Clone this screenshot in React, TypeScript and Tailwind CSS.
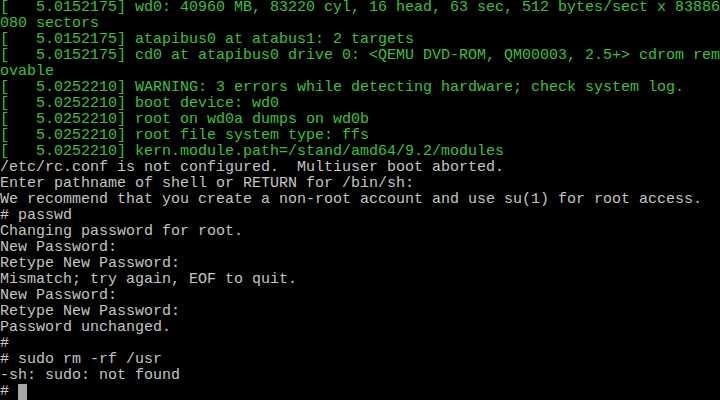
import React from "react";

const green = [
  "[   5.0152175] wd0: 40960 MB, 83220 cyl, 16 head, 63 sec, 512 bytes/sect x 83886",
  "080 sectors",
  "[   5.0152175] atapibus0 at atabus1: 2 targets",
  "[   5.0152175] cd0 at atapibus0 drive 0: <QEMU DVD-ROM, QM00003, 2.5+> cdrom rem",
  "ovable",
  "[   5.0252210] WARNING: 3 errors while detecting hardware; check system log.",
  "[   5.0252210] boot device: wd0",
  "[   5.0252210] root on wd0a dumps on wd0b",
  "[   5.0252210] root file system type: ffs",
  "[   5.0252210] kern.module.path=/stand/amd64/9.2/modules",
];

const white = [
  "/etc/rc.conf is not configured.  Multiuser boot aborted.",
  "Enter pathname of shell or RETURN for /bin/sh:",
  "We recommend that you create a non-root account and use su(1) for root access.",
  "# passwd",
  "Changing password for root.",
  "New Password:",
  "Retype New Password:",
  "Mismatch; try again, EOF to quit.",
  "New Password:",
  "Retype New Password:",
  "Password unchanged.",
  "#",
  "# sudo rm -rf /usr",
  "-sh: sudo: not found",
];

export default function App() {
  return (
    <div
      className="w-[720px] h-[400px] bg-black overflow-hidden text-[15px] leading-[16px]"
      style={{ fontFamily: '"Liberation Mono", "DejaVu Sans Mono", monospace' }}
    >
      {green.map((l, i) => (
        <div key={"g" + i} className="h-[16px] whitespace-pre text-[#3cc03c]">
          {l}
        </div>
      ))}
      {white.map((l, i) => (
        <div key={"w" + i} className="h-[16px] whitespace-pre text-[#c4c4c4]">
          {l}
        </div>
      ))}
      <div className="h-[16px] whitespace-pre text-[#c4c4c4] flex">
        <span>{"# "}</span>
        <span className="inline-block w-[9px] h-[16px] bg-[#a8a8a8]" />
      </div>
    </div>
  );
}
